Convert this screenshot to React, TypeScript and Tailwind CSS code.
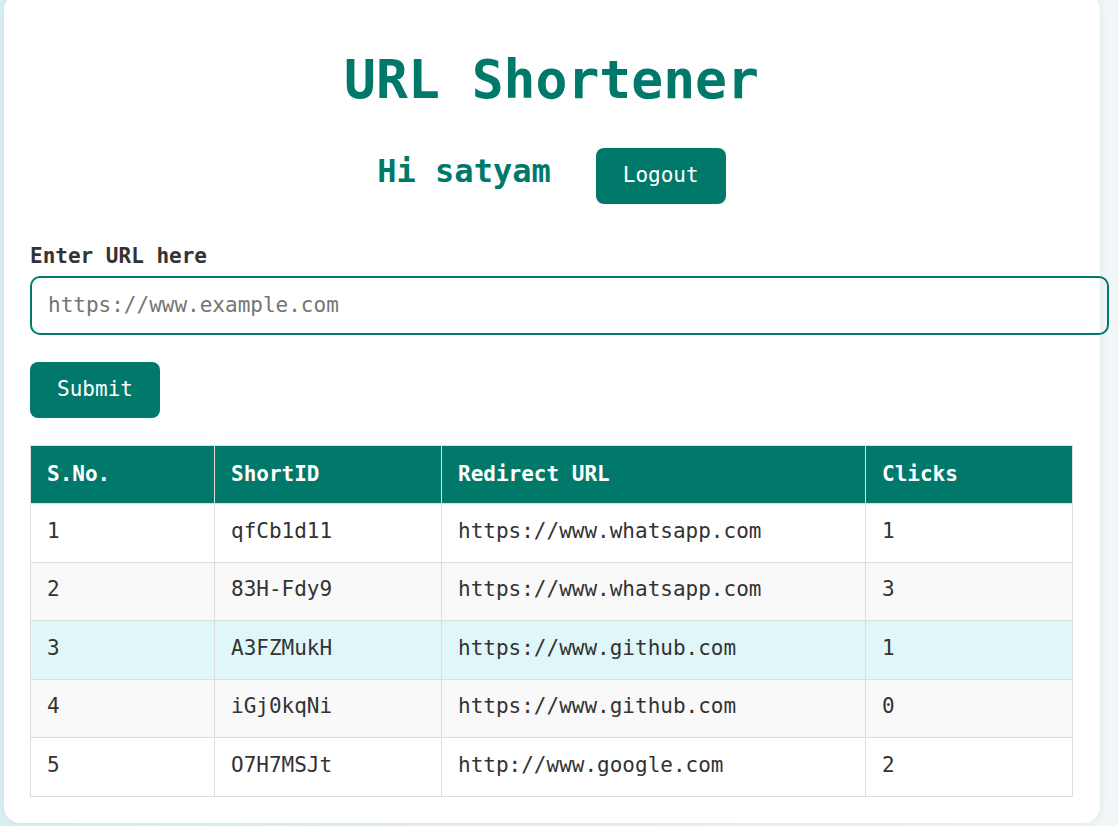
import React, { useState } from 'react';

type Link = { id: string; url: string; clicks: number };

const links: Link[] = [
  { id: 'qfCb1d11', url: 'https://www.whatsapp.com', clicks: 1 },
  { id: '83H-Fdy9', url: 'https://www.whatsapp.com', clicks: 3 },
  { id: 'A3FZMukH', url: 'https://www.github.com', clicks: 1 },
  { id: 'iGj0kqNi', url: 'https://www.github.com', clicks: 0 },
  { id: 'O7H7MSJt', url: 'http://www.google.com', clicks: 2 },
];

const rowBg = ['bg-white', 'bg-[#f9f9f9]', 'bg-[#e0f7fa]', 'bg-[#f9f9f9]', 'bg-white'];

export default function App() {
  const [url, setUrl] = useState('');

  return (
    <div className="h-[826px] overflow-hidden bg-gradient-to-r from-[#dbeff2] to-[#f1f6f7] pl-[4px] font-['DejaVu_Sans_Mono',monospace]">
      <div className="-mt-[6px] w-[1096px] rounded-[16px] bg-white pl-[26px] pr-[27px] pt-[55px] pb-[26px] shadow-[0_0_8px_rgba(0,80,90,0.08)]">
        <h1 className="text-center text-[53px] font-bold leading-[62px] text-[#00796b]">URL Shortener</h1>

        <div className="mt-[37px] flex items-center justify-center gap-[45px]">
          <h2 className="mb-[11px] text-[32px] font-bold leading-[38px] text-[#00796b]">Hi satyam</h2>
          <button className="h-[56px] w-[130px] rounded-[8px] bg-[#00796b] text-[21px] text-white">Logout</button>
        </div>

        {/* form */}
        <label className="mt-[39px] block text-[21px] font-bold leading-[26px] text-[#333]">Enter URL here</label>
        <input
          value={url}
          onChange={(e) => setUrl(e.target.value)}
          placeholder="https://www.example.com"
          className="mt-[7px] box-content block h-[25px] w-full rounded-[10px] border-2 border-[#00796b] px-[16px] py-[15px] text-[21px] text-[#333] outline-none placeholder:text-[#757575]"
        />
        <button className="mt-[27px] block h-[56px] w-[130px] rounded-[8px] bg-[#00796b] text-[21px] text-white">Submit</button>

        {/* table of links */}
        <table className="mt-[27px] w-full table-fixed border-collapse text-[21px] text-[#333]">
          <thead>
            <tr className="bg-[#00796b] text-white">
              <th className="h-[58px] w-[184px] border border-[#ddd] px-[16px] text-left font-bold">S.No.</th>
              <th className="h-[58px] w-[227px] border border-[#ddd] px-[16px] text-left font-bold">ShortID</th>
              <th className="h-[58px] w-[424px] border border-[#ddd] px-[16px] text-left font-bold">Redirect URL</th>
              <th className="h-[58px] border border-[#ddd] px-[16px] text-left font-bold">Clicks</th>
            </tr>
          </thead>
          <tbody>
            {links.map((l, i) => (
              <tr key={l.id} className={rowBg[i]}>
                <td className="h-[58.6px] border border-[#ddd] px-[16px] pb-[3px]">{i + 1}</td>
                <td className="h-[58.6px] border border-[#ddd] px-[16px] pb-[3px]">{l.id}</td>
                <td className="h-[58.6px] border border-[#ddd] px-[16px] pb-[3px]">{l.url}</td>
                <td className="h-[58.6px] border border-[#ddd] px-[16px] pb-[3px]">{l.clicks}</td>
              </tr>
            ))}
          </tbody>
        </table>
      </div>
    </div>
  );
}
